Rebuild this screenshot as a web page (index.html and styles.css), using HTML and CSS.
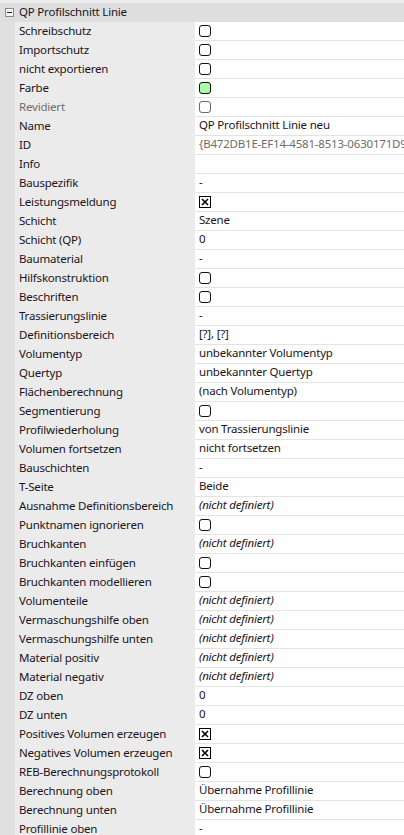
FILE: index.html
```html
<!DOCTYPE html>
<html lang="de">
<head>
    <meta charset="UTF-8">
    <meta name="viewport" content="width=device-width, initial-scale=1.0">
    <title>Eigenschaften</title>
    <link rel="stylesheet" href="styles.css">
</head>
<body>
<div class="property-grid">
    <div class="top-strip"></div>
    <div class="category">
        <span class="toggle"></span>
        <span class="category-title">QP Profilschnitt Linie</span>
    </div>
    <div class="props">
        <div class="gutter"></div>
        <div class="list">
            <div class="row"><div class="label">Schreibschutz</div><div class="value"><span class="check"></span></div></div>
            <div class="row"><div class="label">Importschutz</div><div class="value"><span class="check"></span></div></div>
            <div class="row"><div class="label">nicht exportieren</div><div class="value"><span class="check"></span></div></div>
            <div class="row"><div class="label">Farbe</div><div class="value"><span class="check color"></span></div></div>
            <div class="row"><div class="label disabled">Revidiert</div><div class="value"><span class="check off"></span></div></div>
            <div class="row"><div class="label">Name</div><div class="value">QP Profilschnitt Linie neu</div></div>
            <div class="row"><div class="label">ID</div><div class="value disabled">{B472DB1E-EF14-4581-8513-0630171D9A2C}</div></div>
            <div class="row"><div class="label">Info</div><div class="value"></div></div>
            <div class="row"><div class="label">Bauspezifik</div><div class="value">-</div></div>
            <div class="row"><div class="label">Leistungsmeldung</div><div class="value"><span class="check checked"><svg width="12" height="12" viewBox="0 0 12 12"><rect x="0.5" y="0.5" width="11" height="11" fill="#fff" stroke="#000"/><path d="M3 3 L9 9 M9 3 L3 9" stroke="#000" stroke-width="1.6"/></svg></span></div></div>
            <div class="row"><div class="label">Schicht</div><div class="value">Szene</div></div>
            <div class="row"><div class="label">Schicht (QP)</div><div class="value">0</div></div>
            <div class="row"><div class="label">Baumaterial</div><div class="value">-</div></div>
            <div class="row"><div class="label">Hilfskonstruktion</div><div class="value"><span class="check"></span></div></div>
            <div class="row"><div class="label">Beschriften</div><div class="value"><span class="check"></span></div></div>
            <div class="row"><div class="label">Trassierungslinie</div><div class="value">-</div></div>
            <div class="row"><div class="label">Definitionsbereich</div><div class="value">[?], [?]</div></div>
            <div class="row"><div class="label">Volumentyp</div><div class="value">unbekannter Volumentyp</div></div>
            <div class="row"><div class="label">Quertyp</div><div class="value">unbekannter Quertyp</div></div>
            <div class="row"><div class="label">Flächenberechnung</div><div class="value">(nach Volumentyp)</div></div>
            <div class="row"><div class="label">Segmentierung</div><div class="value"><span class="check"></span></div></div>
            <div class="row"><div class="label">Profilwiederholung</div><div class="value">von Trassierungslinie</div></div>
            <div class="row"><div class="label">Volumen fortsetzen</div><div class="value">nicht fortsetzen</div></div>
            <div class="row"><div class="label">Bauschichten</div><div class="value">-</div></div>
            <div class="row"><div class="label">T-Seite</div><div class="value">Beide</div></div>
            <div class="row"><div class="label">Ausnahme Definitionsbereich</div><div class="value undefined">(nicht definiert)</div></div>
            <div class="row"><div class="label">Punktnamen ignorieren</div><div class="value"><span class="check"></span></div></div>
            <div class="row"><div class="label">Bruchkanten</div><div class="value undefined">(nicht definiert)</div></div>
            <div class="row"><div class="label">Bruchkanten einfügen</div><div class="value"><span class="check"></span></div></div>
            <div class="row"><div class="label">Bruchkanten modellieren</div><div class="value"><span class="check"></span></div></div>
            <div class="row"><div class="label">Volumenteile</div><div class="value undefined">(nicht definiert)</div></div>
            <div class="row"><div class="label">Vermaschungshilfe oben</div><div class="value undefined">(nicht definiert)</div></div>
            <div class="row"><div class="label">Vermaschungshilfe unten</div><div class="value undefined">(nicht definiert)</div></div>
            <div class="row"><div class="label">Material positiv</div><div class="value undefined">(nicht definiert)</div></div>
            <div class="row"><div class="label">Material negativ</div><div class="value undefined">(nicht definiert)</div></div>
            <div class="row"><div class="label">DZ oben</div><div class="value">0</div></div>
            <div class="row"><div class="label">DZ unten</div><div class="value">0</div></div>
            <div class="row"><div class="label">Positives Volumen erzeugen</div><div class="value"><span class="check checked"><svg width="12" height="12" viewBox="0 0 12 12"><rect x="0.5" y="0.5" width="11" height="11" fill="#fff" stroke="#000"/><path d="M3 3 L9 9 M9 3 L3 9" stroke="#000" stroke-width="1.6"/></svg></span></div></div>
            <div class="row"><div class="label">Negatives Volumen erzeugen</div><div class="value"><span class="check checked"><svg width="12" height="12" viewBox="0 0 12 12"><rect x="0.5" y="0.5" width="11" height="11" fill="#fff" stroke="#000"/><path d="M3 3 L9 9 M9 3 L3 9" stroke="#000" stroke-width="1.6"/></svg></span></div></div>
            <div class="row"><div class="label">REB-Berechnungsprotokoll</div><div class="value"><span class="check"></span></div></div>
            <div class="row"><div class="label">Berechnung oben</div><div class="value">Übernahme Profillinie</div></div>
            <div class="row"><div class="label">Berechnung unten</div><div class="value">Übernahme Profillinie</div></div>
            <div class="row"><div class="label">Profillinie oben</div><div class="value">-</div></div>
        </div>
    </div>
</div>
</body>
</html>
```

FILE: styles.css
```css
/* property grid */
body {
    margin: 0;
    font-family: "Noto Sans", Arial, sans-serif;
    font-size: 11.5px;
    letter-spacing: -0.2px;
    color: #1c1420;
    background-color: #ebebeb;
    overflow: hidden;
}
.property-grid {
    width: 404px;
}
.top-strip {
    height: 3px;
    background-color: #ececec;
}
.category {
    display: flex;
    align-items: center;
    height: 19px;
    background-color: #dedede;
}
.toggle {
    position: relative;
    flex: none;
    width: 9px;
    height: 9px;
    box-sizing: border-box;
    margin-left: 5px;
    margin-right: 5px;
    border: 1px solid #8a8a8a;
    background-color: #f4f4f4;
}
.toggle::after {
    content: "";
    position: absolute;
    left: 1px;
    top: 3px;
    width: 5px;
    height: 1px;
    background-color: #222;
}
.category-title {
    line-height: 17px;
    padding-bottom: 2px;
}
.props {
    display: flex;
}
.gutter {
    flex: none;
    width: 15px;
    background-color: #e0e0e0;
}
.list {
    flex: 1;
    min-width: 0;
}
.row {
    display: flex;
    height: 19px;
}
.label {
    flex: none;
    width: 176px;
    padding-left: 4px;
    line-height: 17px;
    white-space: nowrap;
    overflow: hidden;
    background-color: #ebebeb;
}
.value {
    flex: 1;
    min-width: 0;
    display: flex;
    align-items: center;
    height: 16px;
    padding-left: 4px;
    padding-bottom: 2px;
    line-height: 16px;
    white-space: nowrap;
    overflow: hidden;
    background-color: #fff;
    border-bottom: 1px solid #e3e3e3;
}
.disabled {
    color: #6d6d6d;
}
.undefined {
    font-style: italic;
}
.check {
    display: block;
    flex: none;
    width: 12px;
    height: 12px;
    margin-top: 2px;
    box-sizing: border-box;
    border: 1px solid #111;
    border-radius: 3px;
    background-color: #fff;
}
.check.color {
    background-color: #aaffaa;
}
.check.off {
    border-color: #6a6a6a;
}
.check.checked {
    border: none;
    border-radius: 0;
}
.check.checked svg {
    display: block;
}
```
